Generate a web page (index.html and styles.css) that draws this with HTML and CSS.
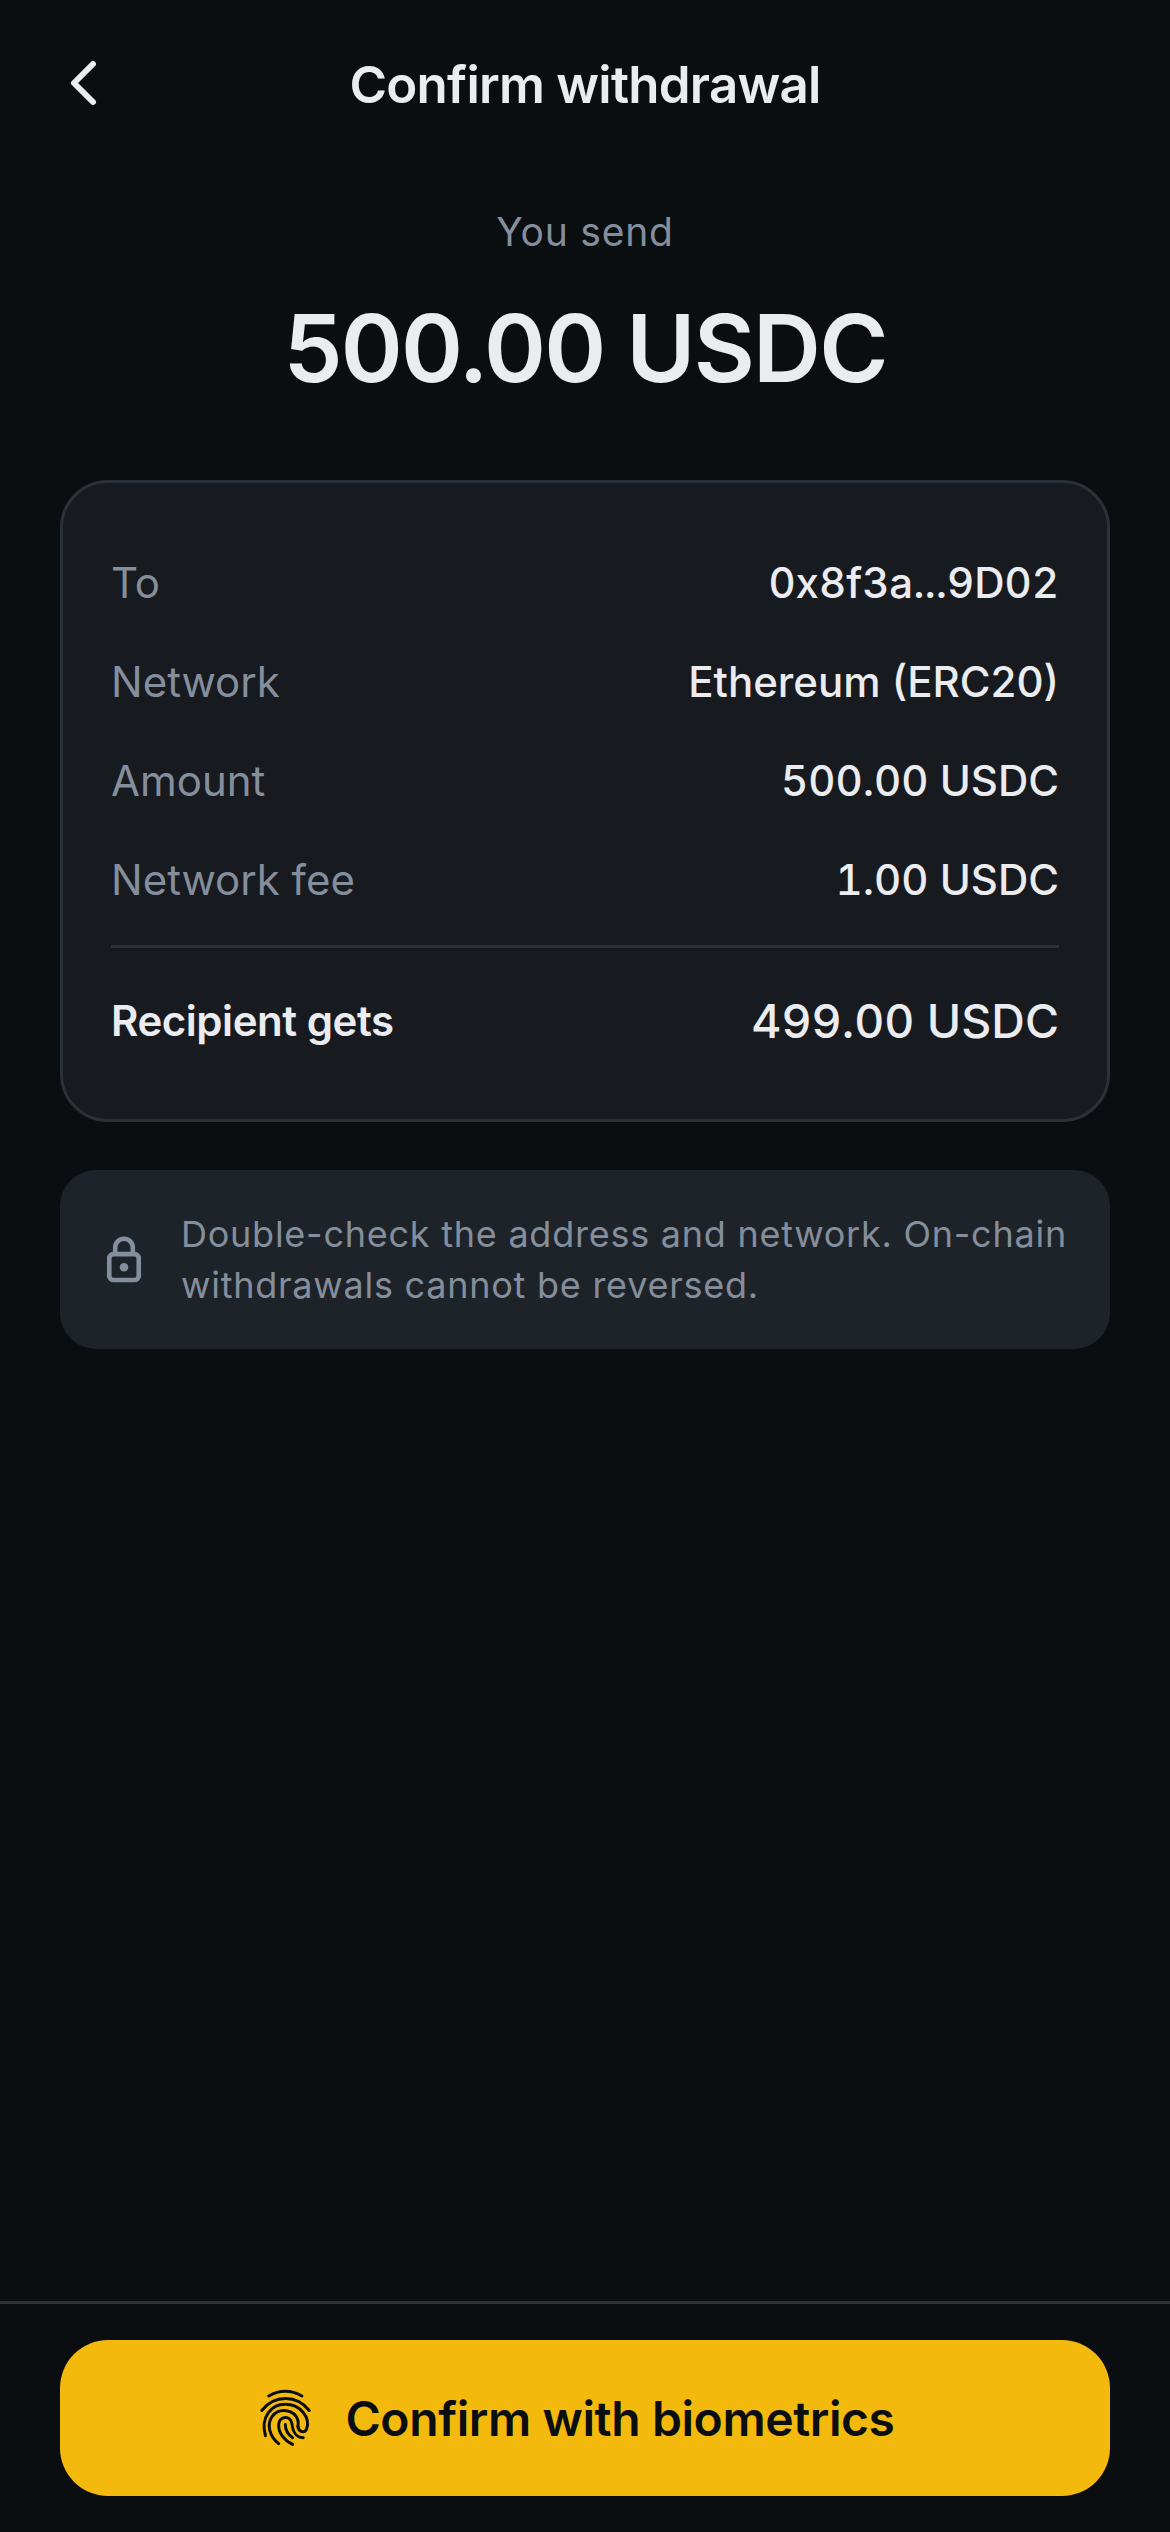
FILE: index.html
```html
<!DOCTYPE html>
<html lang="en">
<head>
  <meta charset="UTF-8" />
  <meta name="viewport" content="width=device-width, initial-scale=1.0"/>
  <title>Confirm withdrawal</title>
  <link rel="stylesheet" href="styles.css">
</head>
<body>
  <div class="screen">
    <header class="topbar">
      <button class="back-btn" aria-label="Back">
        <svg width="36" height="54" viewBox="0 0 36 54"><path d="M27 8 L8 27 L27 46" /></svg>
      </button>
      <h1>Confirm withdrawal</h1>
    </header>

    <main class="content">
      <div class="send-label">You send</div>
      <div class="send-amount">500.00 USDC</div>

      <section class="summary">
        <div class="row"><span class="key">To</span><span class="val">0x8f3a...9D02</span></div>
        <div class="row"><span class="key">Network</span><span class="val val-name">Ethereum (ERC20)</span></div>
        <div class="row"><span class="key">Amount</span><span class="val">500.00 USDC</span></div>
        <div class="row"><span class="key">Network fee</span><span class="val">1.00 USDC</span></div>
        <div class="row row-total"><span class="key">Recipient gets</span><span class="val">499.00 USDC</span></div>
      </section>

      <section class="notice">
        <svg class="lock" width="36" height="48" viewBox="198 257 110 142">
          <rect x="208" y="310" width="90" height="79" rx="12" />
          <path d="M226 310 V290 A27 27 0 0 1 280 290 V310" />
          <circle cx="253" cy="350" r="13" />
        </svg>
        <p>Double-check the address and network. On-chain withdrawals cannot be reversed.</p>
      </section>
    </main>

    <footer class="footer">
      <button class="confirm-btn">
        <svg class="print" width="54" height="58" viewBox="90 85 160 175">
          <path d="M118 106 C150 88 186 88 218 106" />
          <path d="M97 150 C135 102 202 102 240 150" />
          <path d="M108 226 C92 170 125 131 168 131 C212 131 245 170 232 206 C226 220 208 214 206 198" />
          <path d="M148 250 C118 226 112 190 128 168 C150 140 196 146 206 180 C208 188 206 192 206 198" />
          <path d="M190 252 C164 240 146 216 148 192 C150 166 184 162 188 190 C190 212 200 232 222 232" />
          <path d="M168 192 C168 210 176 222 190 232" />
        </svg>
        <span>Confirm with biometrics</span>
      </button>
    </footer>
  </div>
</body>
</html>
```
FILE: styles.css
```css
* {
  box-sizing: border-box;
}
body {
  margin: 0;
  background: #0b0e11;
  font-family: "Inter", sans-serif;
  color: #eaecef;
}
.screen {
  height: 2532px;
  display: flex;
  flex-direction: column;
}
.topbar {
  position: relative;
  height: 165px;
  padding-top: 3px;
  display: flex;
  align-items: center;
  justify-content: center;
}
.topbar h1 {
  margin: 0;
  font-size: 51px;
  font-weight: 600;
  letter-spacing: -0.75px;
}
.back-btn {
  position: absolute;
  left: 66px;
  top: 56px;
  padding: 0;
  border: none;
  background: none;
  display: flex;
}
.back-btn path {
  fill: none;
  stroke: #eaecef;
  stroke-width: 6;
  stroke-linecap: round;
  stroke-linejoin: round;
}
.content {
  flex: 1;
  padding: 0 60px;
}
.send-label {
  margin-top: 42px;
  text-align: center;
  font-size: 39px;
  line-height: 50px;
  letter-spacing: 0.8px;
  color: #848e9c;
}
.send-amount {
  margin-top: 33px;
  text-align: center;
  font-size: 94px;
  line-height: 116px;
  font-weight: 600;
  letter-spacing: -1.8px;
}
.summary {
  margin-top: 74px;
  height: 642px;
  padding: 50px 48px 0;
  background: #171a1f;
  border: 3px solid #2b3139;
  border-radius: 48px;
}
.row {
  height: 99px;
  display: flex;
  align-items: center;
  justify-content: space-between;
  font-size: 42px;
}
.row .key {
  color: #848e9c;
}
.row .val {
  font-weight: 500;
  font-variant-numeric: tabular-nums;
}
.row .val-name {
  font-variant-numeric: normal;
}
.row-total {
  height: 148px;
  margin-top: 16px;
  border-top: 3px solid #2b3139;
}
.row-total .key {
  color: #eaecef;
  font-weight: 600;
  letter-spacing: -0.45px;
}
.row-total .val {
  font-size: 46.5px;
  font-weight: 500;
}
.notice {
  margin-top: 48px;
  height: 179px;
  padding: 0 30px 0 46px;
  display: flex;
  align-items: center;
  gap: 39px;
  background: #1e2329;
  border-radius: 36px;
}
.notice p {
  margin: 0;
  font-size: 36px;
  line-height: 51px;
  letter-spacing: 0.75px;
  color: #848e9c;
}
.lock {
  flex-shrink: 0;
}
.lock rect,
.lock path {
  fill: none;
  stroke: #848e9c;
  stroke-width: 14;
}
.lock circle {
  fill: #848e9c;
}
.footer {
  height: 231px;
  padding: 36px 60px 0;
  border-top: 3px solid #2b3139;
}
.confirm-btn {
  width: 100%;
  height: 156px;
  padding: 0 16px 0 0;
  display: flex;
  align-items: center;
  justify-content: center;
  gap: 32px;
  border: none;
  border-radius: 48px;
  background: #f3b90c;
  color: #0b0e11;
  font-family: inherit;
  font-size: 48px;
  font-weight: 600;
  letter-spacing: -0.4px;
}
.print path {
  fill: none;
  stroke: #0b0e11;
  stroke-width: 9;
  stroke-linecap: round;
}
```
